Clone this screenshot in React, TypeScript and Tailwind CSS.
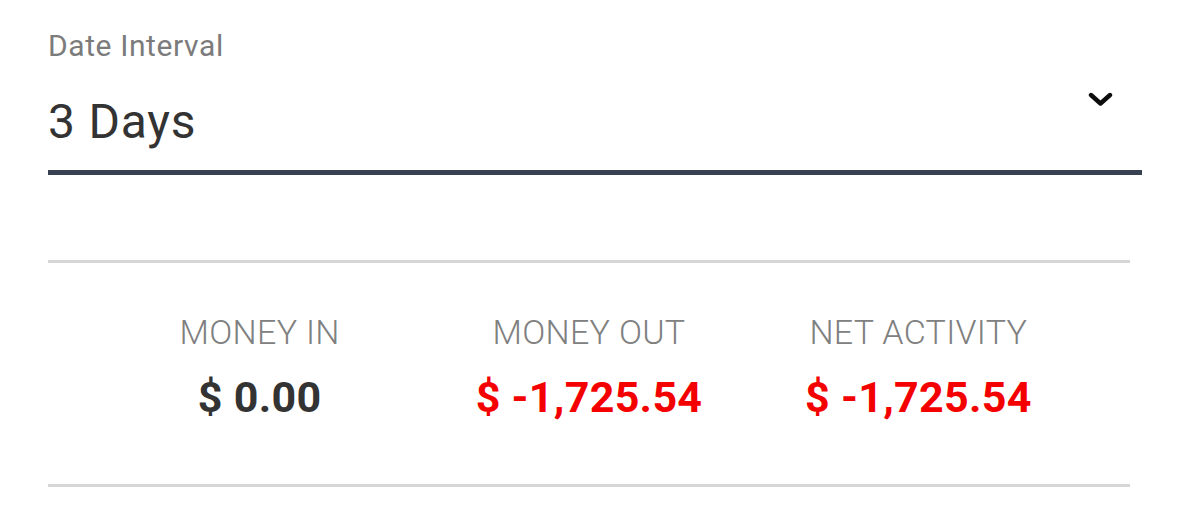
import React from "react";

const stats = [
  { label: "MONEY IN", value: "$ 0.00", negative: false },
  { label: "MONEY OUT", value: "$ -1,725.54", negative: true },
  { label: "NET ACTIVITY", value: "$ -1,725.54", negative: true },
];

export default function App() {
  return (
    <div
      className="w-[1179px] h-[517px] bg-white pl-12 pr-[37px] pt-[31px] overflow-hidden"
      style={{ fontFamily: "Roboto, 'Liberation Sans', sans-serif" }}
    >
      {/* date interval select */}
      <div className="text-[30px] leading-none tracking-[0.6px] text-[#7b7b7b]">Date Interval</div>
      <div className="mt-[37px] flex items-start justify-between border-b-[5px] border-[#374151] pb-[24px]">
        <span className="text-[48px] leading-none tracking-[0.8px] text-[#333333]">3 Days</span>
        <svg
          className="mt-[-6px] mr-[29px]"
          width="25"
          height="15"
          viewBox="0 0 25 15"
          fill="none"
          stroke="#0d0d0d"
          strokeWidth="4.4"
          strokeLinecap="round"
          strokeLinejoin="round"
        >
          <polyline points="3,3 12.5,11.5 22,3" />
        </svg>
      </div>

      {/* summary */}
      <div className="mr-[12px] mt-[85px] h-[3px] bg-[#d6d6d6]" />
      <div className="mr-[12px] grid grid-cols-3 px-[47px] pt-[52px] pb-[65px]">
        {stats.map((s) => (
          <div key={s.label} className="flex flex-col items-center">
            <span className="text-[34px] leading-none font-light tracking-[0.3px] text-[#808080]">{s.label}</span>
            <span
              className={
                "mt-[27px] text-[43px] leading-none font-bold tracking-[0.3px] " +
                (s.negative ? "text-[#f40000]" : "text-[#333333]")
              }
            >
              {s.value}
            </span>
          </div>
        ))}
      </div>
      <div className="mr-[12px] h-[3px] bg-[#d6d6d6]" />
    </div>
  );
}
